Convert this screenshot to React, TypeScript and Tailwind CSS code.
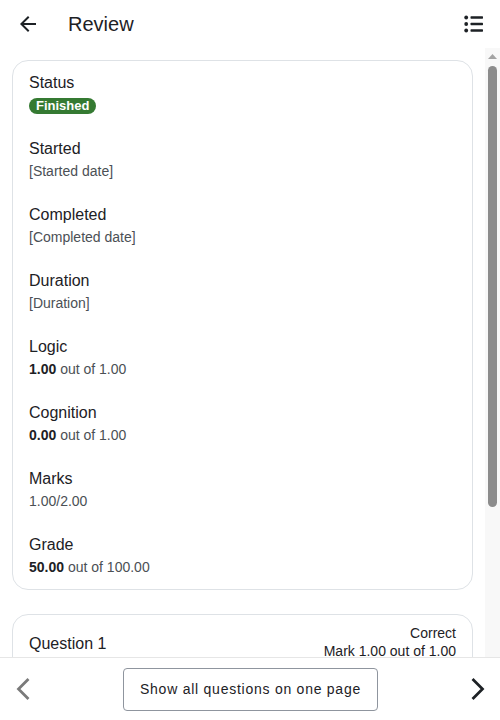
import React from "react";

function Item({ label, children }: { label: string; children: React.ReactNode }) {
  return (
    <div className="flex flex-col">
      <div className="text-[16px] leading-[24px] text-[#1d2125]">{label}</div>
      <div className="text-[14px] leading-[20px] text-[#4b5055]">{children}</div>
    </div>
  );
}

export default function App() {
  return (
    <div
      className="w-[500px] h-[720px] flex flex-col bg-white overflow-hidden"
      style={{ fontFamily: "'Liberation Sans', Arial, sans-serif" }}
    >
      <header className="h-[48px] shrink-0 flex items-center pl-[16px] pr-[14px]">
        <svg width="24" height="24" viewBox="0 0 24 24" className="text-[#1d2125]">
          <path d="M20 11H7.83l5.59-5.59L12 4l-8 8 8 8 1.41-1.41L7.83 13H20v-2z" fill="currentColor" />
        </svg>
        <div className="ml-[28px] text-[20px] text-[#1d2125]">Review</div>
        <div className="flex-1" />
        <svg width="24" height="24" viewBox="0 0 24 24" className="text-[#1d2125]">
          <circle cx="4.2" cy="5.5" r="1.9" fill="currentColor" />
          <circle cx="4.2" cy="12" r="1.9" fill="currentColor" />
          <circle cx="4.2" cy="18.5" r="1.9" fill="currentColor" />
          <rect x="8.5" y="4.3" width="12.5" height="2.4" rx="0.6" fill="currentColor" />
          <rect x="8.5" y="10.8" width="12.5" height="2.4" rx="0.6" fill="currentColor" />
          <rect x="8.5" y="17.3" width="12.5" height="2.4" rx="0.6" fill="currentColor" />
        </svg>
      </header>

      <div className="flex-1 min-h-0 flex">
        <main className="flex-1 min-w-0 overflow-hidden">
          <div className="px-[12px] pt-[12px] pb-[12px] flex flex-col gap-[24px]">
            <section className="border border-[#dee2e6] rounded-[16px] px-[16px] pt-[10px] pb-[12px] flex flex-col gap-[22px]">
              <Item label="Status">
                <span className="inline-flex items-center h-[16px] mt-[2px] px-[7px] rounded-full bg-[#357a32] text-white text-[13px] font-bold leading-[16px]">
                  Finished
                </span>
              </Item>
              <Item label="Started">[Started date]</Item>
              <Item label="Completed">[Completed date]</Item>
              <Item label="Duration">[Duration]</Item>
              <Item label="Logic">
                <b className="font-bold text-[#1d2125]">1.00</b> out of 1.00
              </Item>
              <Item label="Cognition">
                <b className="font-bold text-[#1d2125]">0.00</b> out of 1.00
              </Item>
              <Item label="Marks">1.00/2.00</Item>
              <Item label="Grade">
                <b className="font-bold text-[#1d2125]">50.00</b> out of 100.00
              </Item>
            </section>

            <section className="border border-[#dee2e6] rounded-[16px] px-[16px] pt-[9px] pb-[16px] h-[222px]">
              <div className="flex items-center justify-between">
                <div className="text-[16px] text-[#1d2125] mt-[1px]">Question 1</div>
                <div className="text-right text-[14px] leading-[18px] text-[#1d2125] mb-[3px]">
                  <div>Correct</div>
                  <div>Mark 1.00 out of 1.00</div>
                </div>
              </div>
              <div className="mt-[16px] text-[14px] text-[#1d2125]">Question text</div>
            </section>
          </div>
        </main>

        <div className="w-[15px] shrink-0 bg-[#f8f8f8] flex flex-col items-center">
          <svg width="9" height="6" viewBox="0 0 9 6" className="mt-[6px]">
            <path d="M4.5 0L9 5H0z" fill="#a3a3a3" />
          </svg>
          <div className="mt-[6px] w-[9px] h-[441px] rounded-full bg-[#8c8c8c]" />
        </div>
      </div>

      <footer className="h-[63px] shrink-0 border-t border-[#e6e6e6] flex items-center pl-[7px] pr-[6px] bg-white">
        <svg width="32" height="32" viewBox="0 0 512 512">
          <path d="M328 112L184 256l144 144" fill="none" stroke="#7a7a7a" strokeWidth="44" strokeLinecap="square" strokeLinejoin="miter" />
        </svg>
        <div className="flex-1 flex justify-center">
          <button className="h-[43px] w-[255px] border border-[#8f959e] rounded-[4px] text-[14px] text-[#1d2125] tracking-[0.75px] bg-white">
            Show all questions on one page
          </button>
        </div>
        <svg width="32" height="32" viewBox="0 0 512 512">
          <path d="M184 112l144 144-144 144" fill="none" stroke="#1d2125" strokeWidth="44" strokeLinecap="square" strokeLinejoin="miter" />
        </svg>
      </footer>
    </div>
  );
}
